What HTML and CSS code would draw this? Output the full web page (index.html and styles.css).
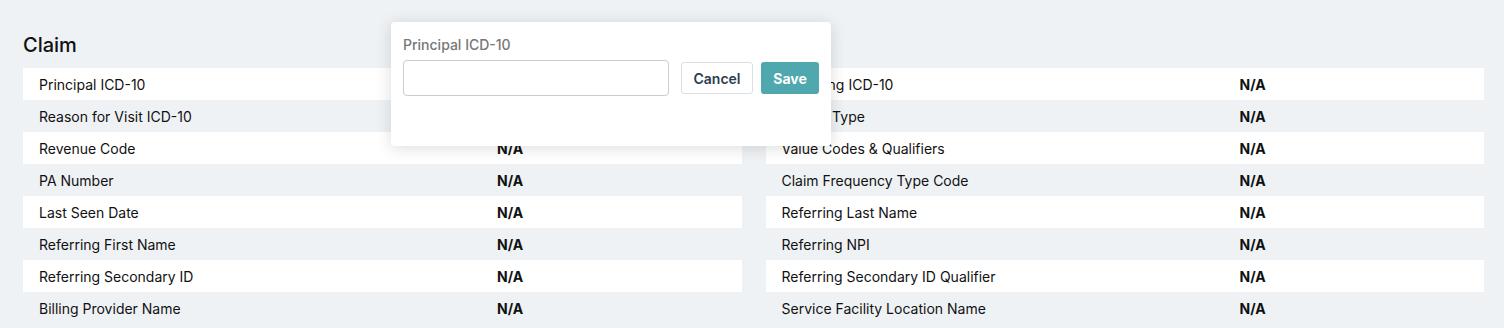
FILE: index.html
```html
<!DOCTYPE html>
<html>

<head>
    <title>Claim</title>
    <link rel="stylesheet" href="styles.css">
</head>

<body>
    <div class="page">
        <h2 class="section-title">Claim</h2>
        <div class="columns">
            <div class="column">
                <div class="row"><span class="label">Principal ICD-10</span><span class="value">N/A</span></div>
                <div class="row"><span class="label">Reason for Visit ICD-10</span><span class="value">N/A</span></div>
                <div class="row"><span class="label">Revenue Code</span><span class="value">N/A</span></div>
                <div class="row"><span class="label">PA Number</span><span class="value">N/A</span></div>
                <div class="row"><span class="label">Last Seen Date</span><span class="value">N/A</span></div>
                <div class="row"><span class="label">Referring First Name</span><span class="value">N/A</span></div>
                <div class="row"><span class="label">Referring Secondary ID</span><span class="value">N/A</span></div>
                <div class="row"><span class="label">Billing Provider Name</span><span class="value">N/A</span></div>
            </div>
            <div class="column">
                <div class="row"><span class="label">Admitting ICD-10</span><span class="value">N/A</span></div>
                <div class="row"><span class="label">Facility Type</span><span class="value">N/A</span></div>
                <div class="row"><span class="label">Value Codes &amp; Qualifiers</span><span class="value">N/A</span></div>
                <div class="row"><span class="label">Claim Frequency Type Code</span><span class="value">N/A</span></div>
                <div class="row"><span class="label">Referring Last Name</span><span class="value">N/A</span></div>
                <div class="row"><span class="label">Referring NPI</span><span class="value">N/A</span></div>
                <div class="row"><span class="label">Referring Secondary ID Qualifier</span><span class="value">N/A</span></div>
                <div class="row"><span class="label">Service Facility Location Name</span><span class="value">N/A</span></div>
            </div>
        </div>

        <!-- inline edit popover -->
        <div class="popover">
            <label class="popover-label" for="principal-icd">Principal ICD-10</label>
            <div class="popover-form">
                <input type="text" id="principal-icd" class="popover-input" />
                <button class="btn btn-cancel">Cancel</button>
                <button class="btn btn-save">Save</button>
            </div>
        </div>
    </div>
</body>

</html>
```

FILE: styles.css
```css
body {
    font-family: Inter, Roboto, "Liberation Sans", Arial, sans-serif;
    margin: 0;
    padding: 0;
    background-color: #eff2f5;
    color: #111;
}

.page {
    position: relative;
    padding: 33px 20px 0 23px;
}

.section-title {
    font-size: 20px;
    font-weight: 500;
    line-height: 24px;
    margin: 0 0 11px 0;
}

.columns {
    display: grid;
    grid-template-columns: 1fr 1fr;
    gap: 24px;
}

.row {
    display: flex;
    align-items: center;
    height: 32px;
    font-size: 14px;
}

.row:nth-child(odd) {
    background-color: #fff;
}

.label {
    width: 458px;
    padding-left: 16px;
}

.value {
    font-weight: 700;
}

.popover {
    position: absolute;
    top: 22px;
    left: 391px;
    width: 440px;
    height: 124px;
    box-sizing: border-box;
    padding: 14px 12px;
    background-color: #fff;
    border-radius: 4px;
    box-shadow: 0 2px 16px rgba(0, 0, 0, 0.14);
}

.popover-label {
    display: block;
    font-size: 14px;
    font-weight: 500;
    color: #777;
    line-height: 18px;
    margin-bottom: 6px;
}

.popover-form {
    display: flex;
    align-items: center;
}

.popover-input {
    width: 266px;
    height: 36px;
    box-sizing: border-box;
    border: 1px solid #c9cdd2;
    border-radius: 4px;
    margin-right: 12px;
}

.btn {
    height: 32px;
    border-radius: 3px;
    font-family: Inter, Roboto, "Liberation Sans", Arial, sans-serif;
    font-size: 14px;
    font-weight: 600;
    cursor: pointer;
}

.btn-cancel {
    width: 72px;
    background-color: #fff;
    border: 1px solid #dcdfe3;
    color: #2c3e50;
    margin-right: 8px;
}

.btn-save {
    width: 58px;
    background-color: #4fa8ad;
    border: none;
    color: #fff;
    font-weight: 700;
}
```
